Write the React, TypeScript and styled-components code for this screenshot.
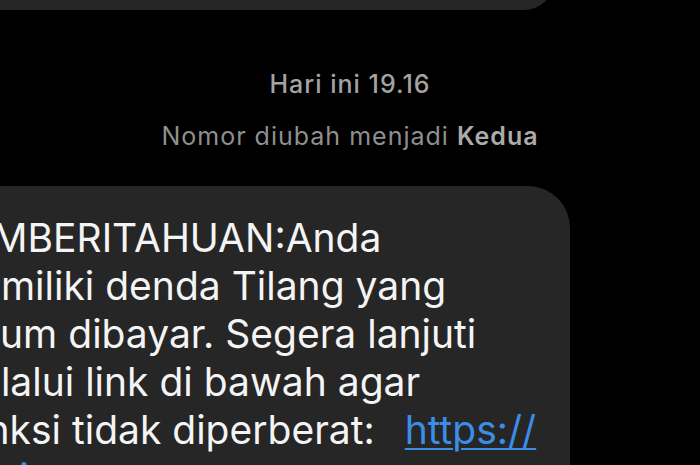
import React from 'react';
import styled, { createGlobalStyle } from 'styled-components';

const GlobalStyle = createGlobalStyle`
    html, body {
        margin: 0;
        padding: 0;
        background: #000;
        overflow: hidden;
    }
`;

const Screen = styled.main`
    width: 700px;
    height: 465px;
    overflow: hidden;
    display: flex;
    flex-direction: column;
    background: #000;
    font-family: 'Inter', 'Noto Sans', sans-serif;
`;

const PrevBubble = styled.div`
    margin-top: -50px;
    margin-left: -40px;
    width: 594px;
    height: 60px;
    flex-shrink: 0;
    border-radius: 30px;
    background-color: #262626;
`;

const Meta = styled.section`
    margin-top: 59px;
    display: flex;
    flex-direction: column;
    align-items: center;
    gap: 22px;
    font-size: 25px;
    line-height: 30px;
    letter-spacing: 1px;
`;

const Stamp = styled.p`
    margin: 0;
    color: #a3a3a3;
    font-weight: 500;
`;

const Notice = styled.p`
    margin: 0;
    color: #8f8f8f;

    b {
        color: #ababab;
        font-weight: 600;
    }
`;

const Bubble = styled.article`
    margin-top: 35px;
    margin-left: -80px;
    width: 650px;
    flex-shrink: 0;
    padding: 28px 0 30px 24px;
    box-sizing: border-box;
    border-radius: 42px;
    background-color: #262626;
    color: #f4f4f4;
    font-size: 39px;
    line-height: 48px;
`;

const Line = styled.span`
    display: block;
    white-space: nowrap;
`;

const Link = styled.a<{ $gap?: number }>`
    margin-left: ${(p) => p.$gap ?? 0}px;
    color: #3b8de6;
    text-decoration: underline;
    text-decoration-thickness: 2px;
    text-underline-offset: 4px;
`;

const lines = [
    'PEMBERITAHUAN:Anda',
    'memiliki denda Tilang yang',
    'belum dibayar. Segera lanjuti',
    'melalui link di bawah agar',
];

export default function App() {
    return (
        <Screen>
            <GlobalStyle />
            <PrevBubble />
            <Meta>
                <Stamp>Hari ini 19.16</Stamp>
                <Notice>
                    Nomor diubah menjadi <b>Kedua</b>
                </Notice>
            </Meta>
            <Bubble>
                {lines.map((l) => (
                    <Line key={l}>{l}</Line>
                ))}
                <Line>
                    sanksi tidak diperberat:
                    <Link href="#" $gap={30}>
                        https://
                    </Link>
                </Line>
                <Line>
                    <Link href="#">smsinaran.co</Link>
                </Line>
            </Bubble>
        </Screen>
    );
}
